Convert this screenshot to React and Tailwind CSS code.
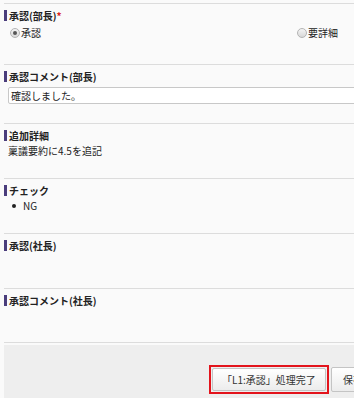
import React from 'react';

const FONT = { fontFamily: '"Noto Sans CJK JP", "Noto Sans", sans-serif' };

function Heading({ children }) {
  return (
    <div className="flex h-[11px] items-center border-l-[3px] border-[#4a3d7c] pl-[2px] text-[10px] font-bold leading-[11px] text-[#222]">
      {children}
    </div>
  );
}

function Radio({ checked, label }) {
  return (
    <label className="flex items-center text-[10px] leading-[10px] text-[#222]">
      <span className="flex h-[10px] w-[10px] items-center justify-center rounded-full border border-[#b4b4b4] bg-gradient-to-b from-[#f4f4f4] to-[#d8d8d8]">
        {checked && <span className="h-[4px] w-[4px] rounded-full bg-[#555]" />}
      </span>
      <span className="ml-px">{label}</span>
    </label>
  );
}

function Section({ h, children }) {
  return (
    <div className={`border-t border-[#dcdcdc] pt-[6px] ${h}`}>{children}</div>
  );
}

export default function App() {
  return (
    <div className="h-[398px] w-[354px] overflow-hidden bg-[#fafafa] pt-[3px]" style={FONT}>
      <div className="ml-1">
        <Section h="h-[61px]">
          <Heading>
            承認(部長)<span className="text-[#d9261c]">*</span>
          </Heading>
          <div className="mt-[7px] flex h-[10px] items-center pl-[6px] pr-[16px]">
            <Radio checked label="承認" />
            <div className="ml-auto">
              <Radio label="要詳細" />
            </div>
          </div>
        </Section>

        <Section h="h-[59px]">
          <Heading>承認コメント(部長)</Heading>
          <div className="ml-[4px] mt-[5px] flex h-[17px] w-[360px] items-center rounded-l-[2px] border border-[#c8c8c8] bg-white pl-[2px] text-[10px] text-[#222]">
            確認しました。
          </div>
        </Section>

        <Section h="h-[55px]">
          <Heading>追加詳細</Heading>
          <div className="mt-[4px] pl-[4px] text-[10px] leading-[12px] text-[#222]">
            稟議要約に4.5を追記
          </div>
        </Section>

        <Section h="h-[55px]">
          <Heading>チェック</Heading>
          <ul className="mt-[4px] pl-[8px] text-[10px] leading-[12px] text-[#222]">
            <li className="flex items-center">
              <span className="h-[4px] w-[4px] rounded-full bg-[#222]" />
              <span className="ml-[7px]">NG</span>
            </li>
          </ul>
        </Section>

        <Section h="h-[55px]">
          <Heading>承認(社長)</Heading>
        </Section>

        <Section h="h-[54px]">
          <Heading>承認コメント(社長)</Heading>
        </Section>

        <div className="border-t border-[#dcdcdc]" />

        <div className="mt-[2px] flex h-[60px] gap-[2px] bg-[#eeeeee] pl-[205px] pt-[20px]">
          <div className="h-[29px] shrink-0 border-2 border-[#e3141c] p-px">
            <button className="flex h-[23px] w-[114px] items-center justify-center rounded-[2px] border border-[#c4c4c4] bg-gradient-to-b from-white to-[#ececec] text-[10px] text-[#333]">
              「L1:承認」処理完了
            </button>
          </div>
          <button className="mt-[2px] flex h-[25px] w-[60px] shrink-0 items-center rounded-[2px] border border-[#c4c4c4] bg-gradient-to-b from-white to-[#ececec] pl-[11px] text-[10px] text-[#333]">
            保存
          </button>
        </div>
      </div>
    </div>
  );
}
